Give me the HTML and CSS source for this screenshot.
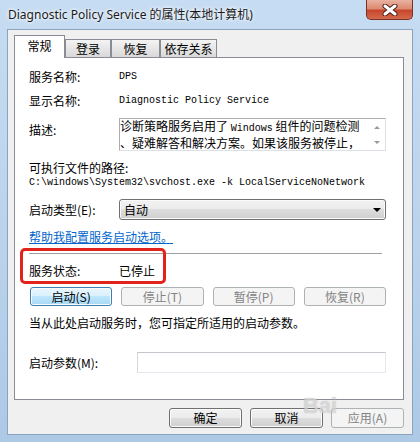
FILE: index.html
```html
<!DOCTYPE html>
<html lang="zh-CN">
<head>
<meta charset="UTF-8">
<meta name="viewport" content="width=device-width, initial-scale=1.0">
<title>Diagnostic Policy Service 的属性</title>
<link rel="stylesheet" href="styles.css">
</head>
<body>
<div class="window">
    <div class="titlebar">
        <span class="title">Diagnostic Policy Service 的属性(本地计算机)</span>
        <span class="close">
            <svg width="16" height="12" viewBox="0 0 16 12">
                <path d="M3 2 L13 10 M13 2 L3 10" stroke="#4a2018" stroke-width="5" stroke-linecap="round"/>
                <path d="M3 2 L13 10 M13 2 L3 10" stroke="#fff" stroke-width="3" stroke-linecap="round"/>
            </svg>
        </span>
    </div>
    <div class="client">
        <div class="tabs">
            <div class="tab active">常规</div>
            <div class="tab w46">登录</div>
            <div class="tab w49">恢复</div>
            <div class="tab w57">依存关系</div>
        </div>
        <div class="panel">
            <div class="row">
                <span class="label">服务名称:</span>
                <span class="mono">DPS</span>
            </div>
            <div class="row gap10">
                <span class="label">显示名称:</span>
                <span class="mono">Diagnostic Policy Service</span>
            </div>
            <div class="row top gap10">
                <span class="label desc-label">描述:</span>
                <div class="memo">
                    <div class="memo-text">诊断策略服务启用了 <span class="mono">Windows</span> 组件的问题检测<br>、疑难解答和解决方案。如果该服务被停止，</div>
                    <div class="scroll">
                        <span class="up"></span>
                        <span class="down"></span>
                    </div>
                </div>
            </div>
            <div class="line gap10">可执行文件的路径:</div>
            <div class="line mono path">C:\windows\System32\svchost.exe -k LocalServiceNoNetwork</div>
            <div class="row gap9">
                <span class="label">启动类型(E):</span>
                <div class="select">自动<span class="arrow"></span></div>
            </div>
            <div class="line gap10"><a class="link" href="#">帮助我配置服务启动选项。</a></div>
            <div class="sep"></div>
            <div class="row gap10">
                <span class="label">服务状态:</span>
                <span>已停止</span>
            </div>
            <div class="buttons gap9">
                <span class="btn focus">启动(S)</span>
                <span class="btn disabled">停止(T)</span>
                <span class="btn disabled">暂停(P)</span>
                <span class="btn disabled">恢复(R)</span>
            </div>
            <div class="line gap10">当从此处启动服务时，您可指定所适用的启动参数。</div>
            <div class="row gap22">
                <span class="label wide">启动参数(M):</span>
                <div class="input"></div>
            </div>
            <div class="mark"></div>
        </div>
        <div class="actions">
            <span class="btn">确定</span>
            <span class="btn">取消</span>
            <span class="btn disabled">应用(A)</span>
        </div>
    </div>
    <div class="watermark">Bai</div>
</div>
</body>
</html>
```

FILE: styles.css
```css
body {
    margin: 0;
    font-family: "Noto Sans CJK SC", "Noto Sans", sans-serif;
    font-size: 12px;
    line-height: 14px;
    color: #000;
}
.window {
    position: relative;
    width: 420px;
    height: 442px;
    box-sizing: border-box;
    padding: 0 8px 8px;
    background: linear-gradient(#c6dcf2, #bcd3ec 50%, #adc9e6);
    overflow: hidden;
}
.titlebar {
    display: flex;
    height: 30px;
}
.title {
    padding-top: 8px;
    font-family: "Noto Sans", "Noto Sans CJK SC", sans-serif;
    color: #1a1a1a;
    text-shadow: 0 0 5px #fff, 0 0 3px #fff;
}
.close {
    margin-left: auto;
    margin-right: -1px;
    width: 47px;
    height: 20px;
    box-sizing: border-box;
    border: 1px solid #7a3226;
    border-top: none;
    border-radius: 0 0 5px 5px;
    background: linear-gradient(#e9b2a2, #dc8a72 45%, #c7462c 55%, #d56a4c);
    display: flex;
    align-items: center;
    justify-content: center;
}
.client {
    height: 404px;
    box-sizing: border-box;
    padding: 5px 8px 0 6px;
    background: #f0f0f0;
    box-shadow: 0 0 0 1px #8aa3bf;
}
.tabs {
    position: relative;
    z-index: 1;
    display: flex;
    align-items: flex-end;
    height: 23px;
    margin-bottom: -1px;
}
.tab {
    box-sizing: border-box;
    height: 18px;
    margin-bottom: 1px;
    padding-top: 2px;
    border: 1px solid #898c95;
    border-bottom: none;
    text-align: center;
    background: linear-gradient(#f4f4f4, #e6e6e6 50%, #d9d9d9);
}
.tab.active {
    width: 51px;
    height: 23px;
    margin-bottom: 0;
    padding-top: 3px;
    background: #fff;
}
.w46 { width: 46px; }
.w49 { width: 49px; }
.w57 { width: 57px; }
.panel {
    position: relative;
    height: 343px;
    box-sizing: border-box;
    padding: 12px 17px 0 14px;
    border: 1px solid #898c95;
    background: #fff;
}
.row {
    display: flex;
    align-items: center;
}
.row.top {
    align-items: flex-start;
}
.label {
    flex: none;
    width: 90px;
}
.label.wide {
    width: 108px;
}
.desc-label {
    padding-top: 5px;
}
.gap9 { margin-top: 9px; }
.gap10 { margin-top: 10px; }
.gap22 { margin-top: 22px; }
.mono {
    font-family: "Liberation Mono", monospace;
    font-size: 10px;
}
.path {
    margin-top: 1px;
}
.memo {
    flex: 1;
    display: flex;
    height: 33px;
    box-sizing: border-box;
    border: 1px solid #dbdfe6;
    border-top-color: #abadb3;
    border-left-color: #abadb3;
}
.memo-text {
    flex: 1;
    line-height: 14px;
    white-space: nowrap;
}
.scroll {
    width: 17px;
    display: flex;
    flex-direction: column;
    align-items: center;
    justify-content: space-between;
    padding: 7px 0 6px;
    box-sizing: border-box;
}
.up, .down {
    border-left: 3px solid transparent;
    border-right: 3px solid transparent;
}
.up { border-bottom: 3px solid #9a9a9a; }
.down { border-top: 3px solid #9a9a9a; }
.select {
    flex: 1;
    display: flex;
    align-items: center;
    height: 21px;
    box-sizing: border-box;
    padding-left: 4px;
    border: 1px solid #707070;
    border-radius: 3px;
    background: linear-gradient(#f2f2f2, #ebebeb 50%, #dddddd 50%, #cfcfcf);
    box-shadow: inset 0 0 0 1px #fbfbfb;
}
.arrow {
    margin-left: auto;
    margin-right: 4px;
    border-left: 4px solid transparent;
    border-right: 4px solid transparent;
    border-top: 4px solid #000;
}
.link {
    color: #0066cc;
    text-decoration: underline;
}
.sep {
    height: 1px;
    margin: 9px 4px 0 0;
    background: #a0a0a0;
}
.buttons {
    display: grid;
    grid-template-columns: repeat(4, 1fr);
    gap: 9px;
    margin-left: 1px;
}
.btn {
    height: 19px;
    box-sizing: border-box;
    border: 1px solid #707070;
    border-radius: 3px;
    text-align: center;
    line-height: 17px;
    background: linear-gradient(#f2f2f2, #ebebeb 50%, #dddddd 50%, #cfcfcf);
    box-shadow: inset 0 0 0 1px #fbfbfb;
}
.btn.focus {
    border-color: #3c7fb1;
    background: linear-gradient(#eaf6fd, #d9f0fc 50%, #bee6fd 50%, #a7d9f5);
}
.btn.disabled {
    border-color: #adb2b5;
    background: #f4f4f4;
    color: #838383;
    box-shadow: none;
}
.input {
    flex: 1;
    height: 21px;
    box-sizing: border-box;
    border: 1px solid #e3e9ef;
    border-top-color: #c3c7cd;
    border-left-color: #d5d8dc;
}
.mark {
    position: absolute;
    left: 5px;
    top: 190px;
    width: 146px;
    height: 36px;
    box-sizing: border-box;
    border: 3px solid #e2231c;
    border-radius: 5px;
}
.actions {
    display: flex;
    justify-content: flex-end;
    gap: 8px;
    margin-top: 8px;
}
.actions .btn {
    width: 73px;
    height: 20px;
    line-height: 18px;
}
.watermark {
    position: absolute;
    left: 303px;
    top: 394px;
    font-family: "Liberation Sans", sans-serif;
    font-size: 22px;
    font-weight: bold;
    line-height: 24px;
    color: rgba(255, 255, 255, 0.55);
    text-shadow: 0 0 1px rgba(120, 120, 120, 0.6);
    pointer-events: none;
}
```
